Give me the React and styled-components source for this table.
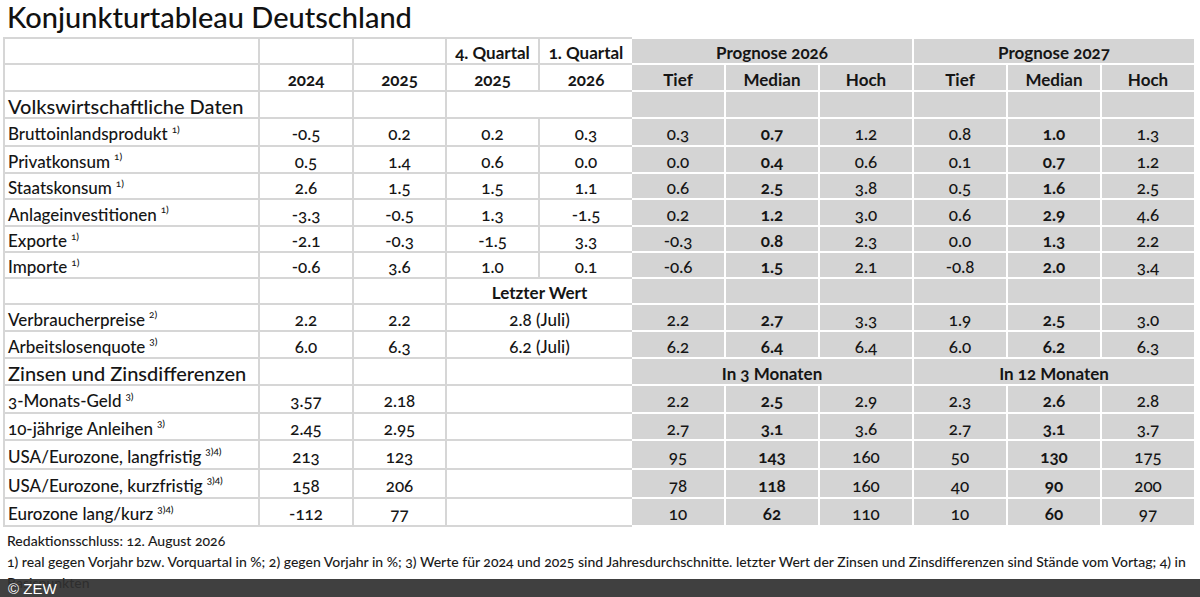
import React from 'react';
import styled, { createGlobalStyle } from 'styled-components';

const GlobalStyle = createGlobalStyle`
  html, body {
    margin: 0;
    padding: 0;
    background: #fff;
  }
  body {
    font-family: Lato, "Open Sans", "DejaVu Sans", sans-serif;
    color: #151515;
    font-variant-numeric: oldstyle-nums;
  }
`;

// row heights measured from the reference (cell height, without the 2px rule)
const ROWS = [24, 25, 25, 26, 25, 24, 25, 24, 24, 24, 25, 25, 25, 26, 25, 27, 27, 26];
const rowTemplate = ROWS.map((h) => `${h}px`).join(' ');

const Page = styled.div`
  position: relative;
  width: 1200px;
  height: 597px;
  overflow: hidden;
`;

const Title = styled.h1`
  margin: 0;
  padding: 2px 0 0 7px;
  height: 34px;
  box-sizing: border-box;
  font-size: 29px;
  font-weight: 500;
  line-height: 30px;
  color: #111;
`;

const Table = styled.div`
  display: flex;
  margin-left: 3px;
  margin-top: 3px;
`;

const LeftGrid = styled.div`
  display: grid;
  grid-template-columns: 253px 92px 91px 91px 92px;
  grid-template-rows: ${rowTemplate};
  gap: 2px;
  padding: 2px 0 2px 2px;
  background: #d6d6d6;
`;

const RightGrid = styled.div`
  display: grid;
  grid-template-columns: repeat(6, 92px);
  grid-template-rows: ${rowTemplate};
  gap: 2px;
  padding: 2px 0;
  width: 562px;
  background: #fff;
`;

const Cell = styled.div`
  display: flex;
  align-items: center;
  justify-content: ${(p) => (p.$left ? 'flex-start' : 'center')};
  padding: ${(p) => (p.$left ? '3px 0 0 3px' : '3px 0 0 0')};
  grid-column: span ${(p) => p.$span || 1};
  background: ${(p) => (p.$shade ? '#d4d4d4' : '#fff')};
  font-size: ${(p) => (p.$section ? '20px' : '17px')};
  font-weight: ${(p) => (p.$bold ? 700 : 500)};
  white-space: nowrap;
  overflow: hidden;
`;

const Sup = styled.sup`
  font-size: 10px;
  margin-left: 4px;
  position: relative;
  top: -5px;
  line-height: 0;
`;

const Notes = styled.div`
  padding: 3px 0 0 7px;
  font-size: 14px;
  font-weight: 500;
  line-height: 21px;
  color: #1a1a1a;
`;

const Copyright = styled.div`
  position: absolute;
  left: 0;
  bottom: 0;
  width: 100%;
  height: 18px;
  background: rgba(48, 48, 48, 0.92);
  color: #fff;
  font-family: "Liberation Sans", Arial, sans-serif;
  font-size: 15px;
  line-height: 20px;
  padding-left: 8px;
  box-sizing: border-box;
  font-variant-numeric: normal;
`;

const volks = [
  ['Bruttoinlandsprodukt', '1)', ['-0.5', '0.2', '0.2', '0.3'], ['0.3', '0.7', '1.2', '0.8', '1.0', '1.3']],
  ['Privatkonsum', '1)', ['0.5', '1.4', '0.6', '0.0'], ['0.0', '0.4', '0.6', '0.1', '0.7', '1.2']],
  ['Staatskonsum', '1)', ['2.6', '1.5', '1.5', '1.1'], ['0.6', '2.5', '3.8', '0.5', '1.6', '2.5']],
  ['Anlageinvestitionen', '1)', ['-3.3', '-0.5', '1.3', '-1.5'], ['0.2', '1.2', '3.0', '0.6', '2.9', '4.6']],
  ['Exporte', '1)', ['-2.1', '-0.3', '-1.5', '3.3'], ['-0.3', '0.8', '2.3', '0.0', '1.3', '2.2']],
  ['Importe', '1)', ['-0.6', '3.6', '1.0', '0.1'], ['-0.6', '1.5', '2.1', '-0.8', '2.0', '3.4']],
];

const prices = [
  ['Verbraucherpreise', '2)', ['2.2', '2.2', '2.8 (Juli)'], ['2.2', '2.7', '3.3', '1.9', '2.5', '3.0']],
  ['Arbeitslosenquote', '3)', ['6.0', '6.3', '6.2 (Juli)'], ['6.2', '6.4', '6.4', '6.0', '6.2', '6.3']],
];

const rates = [
  ['3-Monats-Geld', '3)', ['3.57', '2.18'], ['2.2', '2.5', '2.9', '2.3', '2.6', '2.8']],
  ['10-jährige Anleihen', '3)', ['2.45', '2.95'], ['2.7', '3.1', '3.6', '2.7', '3.1', '3.7']],
  ['USA/Eurozone, langfristig', '3)4)', ['213', '123'], ['95', '143', '160', '50', '130', '175']],
  ['USA/Eurozone, kurzfristig', '3)4)', ['158', '206'], ['78', '118', '160', '40', '90', '200']],
  ['Eurozone lang/kurz', '3)4)', ['-112', '77'], ['10', '62', '110', '10', '60', '97']],
];

function Label({ name, note }) {
  return (
    <Cell $left>
      {name}
      <Sup>{note}</Sup>
    </Cell>
  );
}

function ForecastCells({ values }) {
  return values.map((v, i) => (
    <Cell key={i} $shade $bold={i === 1 || i === 4}>{v}</Cell>
  ));
}

export default function App() {
  return (
    <Page>
      <GlobalStyle />
      <Title>Konjunkturtableau Deutschland</Title>
      <Table>
        <LeftGrid>
          {/* header */}
          <Cell />
          <Cell />
          <Cell />
          <Cell $bold>4. Quartal</Cell>
          <Cell $bold>1. Quartal</Cell>
          <Cell />
          <Cell $bold>2024</Cell>
          <Cell $bold>2025</Cell>
          <Cell $bold>2025</Cell>
          <Cell $bold>2026</Cell>

          <Cell $left $section>Volkswirtschaftliche Daten</Cell>
          <Cell />
          <Cell />
          <Cell $span={2} />
          {volks.map(([name, note, vals]) => (
            <React.Fragment key={name}>
              <Label name={name} note={note} />
              {vals.map((v, i) => <Cell key={i}>{v}</Cell>)}
            </React.Fragment>
          ))}

          <Cell />
          <Cell />
          <Cell />
          <Cell $span={2} $bold>Letzter Wert</Cell>
          {prices.map(([name, note, vals]) => (
            <React.Fragment key={name}>
              <Label name={name} note={note} />
              <Cell>{vals[0]}</Cell>
              <Cell>{vals[1]}</Cell>
              <Cell $span={2}>{vals[2]}</Cell>
            </React.Fragment>
          ))}

          <Cell $left $section>Zinsen und Zinsdifferenzen</Cell>
          <Cell />
          <Cell />
          <Cell $span={2} />
          {rates.map(([name, note, vals]) => (
            <React.Fragment key={name}>
              <Label name={name} note={note} />
              <Cell>{vals[0]}</Cell>
              <Cell>{vals[1]}</Cell>
              <Cell $span={2} />
            </React.Fragment>
          ))}
        </LeftGrid>

        <RightGrid>
          <Cell $shade $bold $span={3}>Prognose 2026</Cell>
          <Cell $shade $bold $span={3}>Prognose 2027</Cell>
          {['Tief', 'Median', 'Hoch', 'Tief', 'Median', 'Hoch'].map((h, i) => (
            <Cell key={i} $shade $bold>{h}</Cell>
          ))}

          <ForecastCells values={['', '', '', '', '', '']} />
          {volks.map(([name, , , fc]) => <ForecastCells key={name} values={fc} />)}

          <ForecastCells values={['', '', '', '', '', '']} />
          {prices.map(([name, , , fc]) => <ForecastCells key={name} values={fc} />)}

          <Cell $shade $bold $span={3}>In 3 Monaten</Cell>
          <Cell $shade $bold $span={3}>In 12 Monaten</Cell>
          {rates.map(([name, , , fc]) => <ForecastCells key={name} values={fc} />)}
        </RightGrid>
      </Table>

      <Notes>
        <div>Redaktionsschluss: 12. August 2026</div>
        <div>
          1) real gegen Vorjahr bzw. Vorquartal in %; 2) gegen Vorjahr in %; 3) Werte für 2024 und 2025 sind Jahresdurchschnitte. letzter Wert der Zinsen und Zinsdifferenzen sind Stände vom Vortag; 4) in
          <br />
          Basispunkten
        </div>
      </Notes>

      <Copyright>© ZEW</Copyright>
    </Page>
  );
}
